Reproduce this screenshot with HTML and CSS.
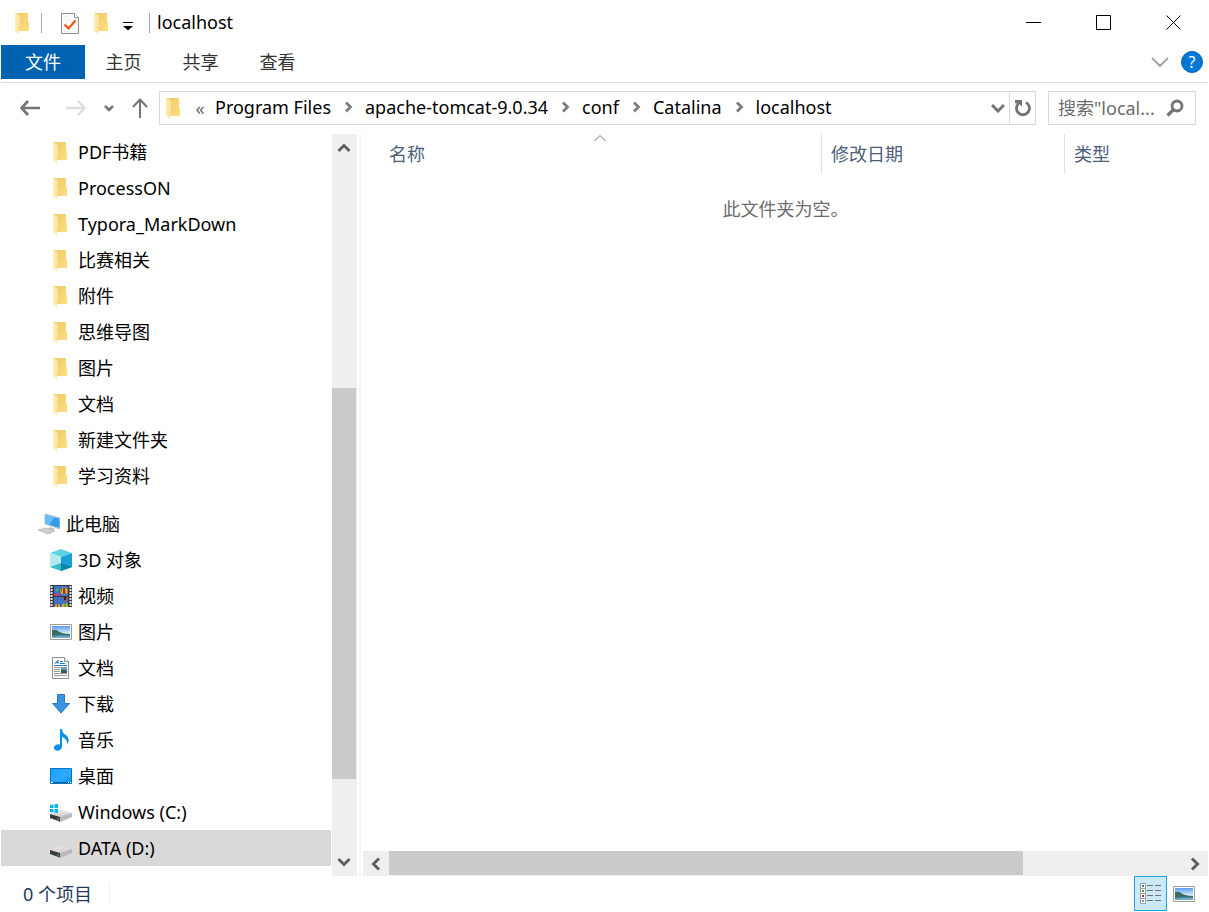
FILE: index.html
```html
<!DOCTYPE html>
<html lang="zh-CN">
<head>
	<meta charset="UTF-8">
	<title>localhost</title>
	<link rel="stylesheet" href="styles.css">
</head>
<body>
<svg class="defs" width="0" height="0">
	<defs>
		<linearGradient id="g-folder" x1="0" y1="0" x2="1" y2="1">
			<stop offset="0" stop-color="#eec762"/><stop offset="1" stop-color="#ffdf85"/>
		</linearGradient>
		<linearGradient id="g-flap" x1="0" y1="0" x2="1" y2="0">
			<stop offset="0" stop-color="#ffeeb4"/><stop offset="1" stop-color="#fbe09a"/>
		</linearGradient>
		<linearGradient id="g-sky" x1="0" y1="0" x2="0" y2="1">
			<stop offset="0" stop-color="#5a9cf0"/><stop offset=".6" stop-color="#d5ecfa"/>
		</linearGradient>
		<linearGradient id="g-drive" x1="0" y1="0" x2="0" y2="1">
			<stop offset="0" stop-color="#e4e4e6"/><stop offset="1" stop-color="#c6c6ca"/>
		</linearGradient>
		<linearGradient id="g-screen" x1="0" y1="0" x2="1" y2="1">
			<stop offset="0" stop-color="#1aa0fa"/><stop offset=".6" stop-color="#2cabff"/><stop offset="1" stop-color="#0b90ee"/>
		</linearGradient>
	</defs>
	<symbol id="i-folder" viewBox="0 0 22 22">
		<path d="M3 1h13v9h1v9H6z" fill="url(#g-folder)"/>
		<path d="M3 1l5 2v12l-1 1v6l-4-3z" fill="url(#g-flap)"/>
	</symbol>
	<symbol id="i-picture" viewBox="0 0 22 22">
		<path d="M.5 3.500h21v15H.5z" fill="#fff" stroke="#9c9c9c"/>
		<path d="M2 5h18v12H2z" fill="url(#g-sky)"/>
		<path d="M2 9q4-1 6 1 4 3 12 3v4H2z" fill="#3d6b5c"/>
		<path d="M2 14q8-1 18 0v3H2z" fill="#3f7fa0"/>
		<path d="M2 16q8-2 18-1v2H2z" fill="#74a8c4"/>
	</symbol>
	<symbol id="i-drive" viewBox="0 0 22 22">
		<path d="M0 13l11-4 11 3v3l-12 6-10-4z" fill="url(#g-drive)"/>
		<path d="M0 13l10 3v4.500L0 17z" fill="#3a3a3a"/>
		<path d="M10 16l12-4v4l-12 5z" fill="#b9b9bd"/>
		<path d="M8 17v2" stroke="#45d04c"/>
	</symbol>
	<symbol id="i-right" viewBox="0 0 10 12">
		<path d="M2 1.500l4.500 4.500L2 10.500" fill="none" stroke="#7d7d7d" stroke-width="2.800"/>
	</symbol>
</svg>

<div class="window">
	<header class="titlebar">
		<svg class="icon"><use href="#i-folder"/></svg>
		<span class="bar bar-first"></span>
		<button class="quick" aria-label="属性">
			<svg class="icon" viewBox="0 0 22 22">
				<path d="M2.500 1.500h13l4 4v16h-17z" fill="#f7f9fb" stroke="#8f8f8f"/>
				<path d="M15.500 1.500v4h4" fill="#fff" stroke="#8f8f8f"/>
				<path d="M5.500 12.500l4 4 7-8" fill="none" stroke="#f0560f" stroke-width="2.200"/>
			</svg>
		</button>
		<button class="quick" aria-label="新建文件夹"><svg class="icon"><use href="#i-folder"/></svg></button>
		<button class="custom" aria-label="自定义快速访问工具栏">
			<svg width="10" height="10" viewBox="0 0 10 10"><path d="M0 1.500h10" stroke="#000"/><path d="M0 5h10L5 9.500z"/></svg>
		</button>
		<span class="bar"></span>
		<h1>localhost</h1>
		<div class="controls">
			<button aria-label="最小化"><svg width="15" height="15"><path d="M0 7.500h15" stroke="#000"/></svg></button>
			<button aria-label="最大化"><svg width="15" height="15"><path d="M.5 .5h14v14H.5z" fill="none" stroke="#000"/></svg></button>
			<button aria-label="关闭"><svg width="15" height="15"><path d="M.5 .5l14 14M14.500 .5l-14 14" stroke="#000"/></svg></button>
		</div>
	</header>

	<nav class="ribbon">
		<button class="tab file">文件</button>
		<button class="tab">主页</button>
		<button class="tab">共享</button>
		<button class="tab">查看</button>
		<button class="expand" aria-label="展开功能区">
			<svg width="18" height="12"><path d="M1 2l8 8 8-8" fill="none" stroke="#a6a6a6" stroke-width="2"/></svg>
		</button>
		<button class="help" aria-label="帮助">?</button>
	</nav>

	<div class="toolbar">
		<div class="history">
			<button class="go" aria-label="后退">
				<svg width="20" height="16"><path d="M1 8h19M8 1L1.500 8 8 15" fill="none" stroke="#747474" stroke-width="2.600"/></svg>
			</button>
			<button class="go" aria-label="前进">
				<svg width="20" height="16"><path d="M0 8h19M12 1l6.500 7-6.500 7" fill="none" stroke="#dcdcdc" stroke-width="2.500"/></svg>
			</button>
			<button class="recent" aria-label="最近浏览的位置">
				<svg width="10" height="8"><path d="M1 2l4 4 4-4" fill="none" stroke="#747474" stroke-width="2.500"/></svg>
			</button>
			<button class="up" aria-label="上移">
				<svg width="16" height="20"><path d="M8 20V2M1 9l7-7.500L15 9" fill="none" stroke="#747474" stroke-width="2"/></svg>
			</button>
		</div>
		<div class="address">
			<svg class="icon"><use href="#i-folder"/></svg>
			<button class="more" aria-label="上级">«</button>
			<ol class="crumbs">
				<li><a href="#">Program Files</a></li>
				<li><svg><use href="#i-right"/></svg><a href="#">apache-tomcat-9.0.34</a></li>
				<li><svg><use href="#i-right"/></svg><a href="#">conf</a></li>
				<li><svg><use href="#i-right"/></svg><a href="#">Catalina</a></li>
				<li><svg><use href="#i-right"/></svg><a href="#">localhost</a></li>
			</ol>
			<button class="drop" aria-label="以前的位置">
				<svg width="14" height="10"><path d="M1 2l6 6 6-6" fill="none" stroke="#747474" stroke-width="3"/></svg>
			</button>
			<button class="refresh" aria-label="刷新">
				<svg width="18" height="18"><path d="M12 3.500a6.500 6.500 0 1 1-7.500 1" fill="none" stroke="#747474" stroke-width="2.800"/><path d="M1 1h7v7L6 5.500 1 4z" fill="#747474"/></svg>
			</button>
		</div>
		<form class="search">
			<input type="text" aria-label="搜索" placeholder="搜索&quot;local...">
			<button type="button" aria-label="搜索">
				<svg width="18" height="18"><circle cx="11" cy="7" r="5" fill="none" stroke="#747474" stroke-width="2.800"/><path d="M7.500 10.500l-6 6" stroke="#747474" stroke-width="3.200"/></svg>
			</button>
		</form>
	</div>

	<div class="main">
		<nav class="tree">
			<ul>
				<li><a href="#"><svg class="icon"><use href="#i-folder"/></svg>PDF书籍</a></li>
				<li><a href="#"><svg class="icon"><use href="#i-folder"/></svg>ProcessON</a></li>
				<li><a href="#"><svg class="icon"><use href="#i-folder"/></svg>Typora_MarkDown</a></li>
				<li><a href="#"><svg class="icon"><use href="#i-folder"/></svg>比赛相关</a></li>
				<li><a href="#"><svg class="icon"><use href="#i-folder"/></svg>附件</a></li>
				<li><a href="#"><svg class="icon"><use href="#i-folder"/></svg>思维导图</a></li>
				<li><a href="#"><svg class="icon"><use href="#i-folder"/></svg>图片</a></li>
				<li><a href="#"><svg class="icon"><use href="#i-folder"/></svg>文档</a></li>
				<li><a href="#"><svg class="icon"><use href="#i-folder"/></svg>新建文件夹</a></li>
				<li><a href="#"><svg class="icon"><use href="#i-folder"/></svg>学习资料</a></li>
			</ul>
			<ul>
				<li><a href="#" class="root">
					<svg class="icon" viewBox="0 0 22 22">
						<path d="M7 1l15 4v11L7 11z" fill="#dfe5ea" stroke="#8c9aa5" stroke-width=".6"/>
						<path d="M7.500 2L21.500 5.500v9.500L7.500 10.500z" fill="#2f9df2"/>
						<path d="M7.500 2l9 2.300-5 7.400-4-1.200z" fill="#67bdf8"/>
						<path d="M12 14l5 2-4 3-4-2z" fill="#b9bfc4"/>
						<path d="M0 17l8-2 9 3-7 3z" fill="#dfe2e6" stroke="#9da3a8" stroke-width=".6"/>
						<path d="M3 17l9 3M6 16l8 3" stroke="#9da3a8" stroke-width=".6"/>
					</svg>此电脑</a></li>
				<li><a href="#">
					<svg class="icon" viewBox="0 0 22 22">
						<path d="M0 4l11-4 11 4-11 4z" fill="#5cd3e2"/>
						<path d="M0 4l11 4v14L0 18z" fill="#b5e8ec"/>
						<path d="M22 4L11 8v14l11-4z" fill="#1a9fd6"/>
						<path d="M0 18l11-4v8z" fill="#35bdcb"/>
						<path d="M22 18l-11-4v8z" fill="#0c86a4"/>
					</svg>3D 对象</a></li>
				<li><a href="#">
					<svg class="icon" viewBox="0 0 22 22">
						<path d="M0 0h22v22H0z" fill="#3a3a3a"/>
						<path d="M4 1h14v10H4zM4 12h14v10H4z" fill="#3f70c8"/>
						<path d="M1.500 1v21M20.500 1v21" stroke="#e8e8e8" stroke-width="2" stroke-dasharray="2 1"/>
						<path d="M4 10q2-3 5-1l1 2H4z" fill="#d83a6c"/>
						<circle cx="14" cy="6" r="3.500" fill="#e3b21c"/><path d="M13 3h2l.5 6h-2.500z" fill="#b72426"/><path d="M11 4l1-1v5z" fill="#2a7a34"/>
						<circle cx="7" cy="5" r="1.500" fill="#56b64a"/>
						<path d="M13 12h5l-2 4h-2z" fill="#d34518"/><path d="M14 12h2v3h-2z" fill="#27221c"/>
						<path d="M5 22q0-3 2.500-3t2.500 3z" fill="#e3b21c"/><path d="M7 19h1v3H7z" fill="#b72426"/>
						<path d="M12 22q0-4 3-4t3 4z" fill="#e3b21c"/><path d="M14 18h2v4h-2z" fill="#56a63c"/>
					</svg>视频</a></li>
				<li><a href="#"><svg class="icon"><use href="#i-picture"/></svg>图片</a></li>
				<li><a href="#">
					<svg class="icon" viewBox="0 0 22 22">
						<path d="M2.500 .5h12l4 4v17h-16z" fill="#fff" stroke="#8f8f8f"/>
						<path d="M14.500 .5v4h4" fill="#f3f3f3" stroke="#8f8f8f"/>
						<path d="M4.500 7l3.500-4v4M6 5.500h2M10 4.500h3M10 6.500h5M4 8.500h13" fill="none" stroke="#1883c6"/>
						<path d="M4 10.500h13M4 12.500h6M4 14.500h6M4 16.500h13M4 18.500h13" stroke="#9a9a9a"/>
						<path d="M11 11h6v5h-6z" fill="#5a95c8"/><path d="M11 13q3-1 6 1v2h-6z" fill="#2f5d58"/>
					</svg>文档</a></li>
				<li><a href="#">
					<svg class="icon" viewBox="0 0 22 22">
						<path d="M7.500 1.500h7v9h5l-8.500 9.500-8.500-9.500h5z" fill="#3c93e2" stroke="#2677c0"/>
					</svg>下载</a></li>
				<li><a href="#">
					<svg class="icon" viewBox="0 0 22 22">
						<path d="M10 0h2q0 4 4 6 5 4 1 10 1-6-5-8v9q0 3-3 4.500-4 1-5-2-.5-3 3-4 2-.5 3 0z" fill="#0a93e6"/>
					</svg>音乐</a></li>
				<li><a href="#">
					<svg class="icon" viewBox="0 0 22 22">
						<path d="M.5 3.500h21v15H.5z" fill="url(#g-screen)" stroke="#0874be"/>
						<path d="M1 17.500h20" stroke="#0b5d98"/>
						<path d="M1 17.500h2M18 17.500h1M20 17.500h1" stroke="#fff"/>
					</svg>桌面</a></li>
				<li><a href="#">
					<svg class="icon" viewBox="0 0 22 22">
						<use href="#i-drive" width="22" height="22"/>
						<path d="M0 4l3.500-.5V7H0zM4.500 3.300L8 3v4H4.500zM0 8h3.500v3.500L0 11zM4.500 8H8v4l-3.500-.4z" fill="#00b4ee"/>
					</svg>Windows (C:)</a></li>
				<li><a href="#" class="current"><svg class="icon"><use href="#i-drive"/></svg>DATA (D:)</a></li>
			</ul>
		</nav>
		<div class="scroll vertical">
			<button aria-label="向上滚动"><svg width="14" height="10"><path d="M1.500 8L7 2.500 12.500 8" fill="none" stroke="#606060" stroke-width="3"/></svg></button>
			<div class="track"><div class="thumb"></div></div>
			<button aria-label="向下滚动"><svg width="14" height="10"><path d="M1.500 2L7 7.500 12.500 2" fill="none" stroke="#606060" stroke-width="3"/></svg></button>
		</div>
		<div class="splitter"></div>
		<section class="content">
			<div class="files">
				<table>
					<thead>
						<tr>
							<th class="name"><svg class="sort" width="12" height="8"><path d="M.5 7L6 1.500 11.500 7" fill="none" stroke="#707070"/></svg>名称</th>
							<th class="date">修改日期</th>
							<th>类型</th>
						</tr>
					</thead>
					<tbody>
						<tr><td colspan="3">此文件夹为空。</td></tr>
					</tbody>
				</table>
			</div>
			<div class="scroll horizontal">
				<button aria-label="向左滚动"><svg width="10" height="14"><path d="M8 1.500L2.500 7 8 12.500" fill="none" stroke="#606060" stroke-width="3"/></svg></button>
				<div class="track"><div class="thumb"></div></div>
				<button aria-label="向右滚动"><svg width="10" height="14"><path d="M2 1.500L7.500 7 2 12.500" fill="none" stroke="#606060" stroke-width="3"/></svg></button>
			</div>
		</section>
	</div>

	<footer class="status">
		<span class="count">0 个项目</span>
		<div class="views">
			<button class="active" aria-label="详细信息">
				<svg width="22" height="22" viewBox="0 0 22 22">
					<path d="M.5 .5h5v5h-5zM.5 5.500h5v5h-5zM.5 10.500h5v5h-5zM.5 15.500h5v5h-5z" fill="#fff" stroke="#9c9c9c"/>
					<path d="M2 2h2v2H2z" fill="#3b7cae"/><path d="M2 7h2v2H2z" fill="#5a8f3c"/><path d="M2 12h2v2H2z" fill="#cf2a1c"/><path d="M2 17h2v2H2z" fill="#7fa9a0"/>
					<path d="M7 2.500h6M15 2.500h6M7 7.500h6M15 7.500h6M7 12.500h6M15 12.500h6M7 17.500h6M15 17.500h6" stroke="#707070"/>
				</svg>
			</button>
			<button aria-label="大缩略图"><svg class="icon"><use href="#i-picture"/></svg></button>
		</div>
	</footer>
</div>
</body>
</html>
```
FILE: styles.css
```css
*{
	box-sizing: border-box;
}
body{
	margin: 0;
	font-family: "Noto Sans", "Noto Sans CJK SC", sans-serif;
	font-size: 18px;
	line-height: 24px;
	color: #000;
	background: #fff;
}
button{
	display: flex;
	align-items: center;
	justify-content: center;
	padding: 0;
	border: none;
	background: none;
	font: inherit;
	color: inherit;
}
a{
	color: inherit;
	text-decoration: none;
}
ul,ol{
	margin: 0;
	padding: 0;
	list-style: none;
}
svg{
	display: block;
	flex: none;
}
.defs{
	position: absolute;
}
.icon{
	width: 22px;
	height: 22px;
}
.window{
	display: flex;
	flex-direction: column;
	height: 100vh;
	padding: 0 1px;
}

/* 标题栏 */
.titlebar{
	display: flex;
	align-items: center;
	height: 45px;
	padding-left: 11px;
}
.bar{
	width: 1px;
	height: 20px;
	background: #a8a8a8;
}
.bar-first{
	margin: 0 17px 0 7px;
}
.quick{
	margin-right: 10px;
}
.custom{
	width: 18px;
	margin: 6px 12px 0 -4px;
}
h1{
	margin: 0 0 0 7px;
	padding-bottom: 2px;
	font-size: 18px;
	font-weight: normal;
}
.controls{
	display: flex;
	margin-left: auto;
}
.controls button{
	width: 70px;
	height: 45px;
}

/* 功能区 */
.ribbon{
	display: flex;
	align-items: center;
	height: 38px;
	padding-bottom: 3px;
	border-bottom: 1px solid #dadbdc;
}
.tab{
	width: 77px;
	height: 34px;
	color: #333;
}
.file{
	width: 84px;
	background: #0063b1;
	color: #fff;
}
.expand{
	margin-left: auto;
}
.help{
	width: 22px;
	height: 22px;
	margin: 0 5px 0 12px;
	border-radius: 50%;
	background: #0078d7;
	border: 1px solid #0065b8;
	color: #fff;
	font-size: 16px;
}

/* 地址栏 */
.toolbar{
	display: flex;
	height: 51px;
	padding: 8px 12px 9px 19px;
}
.history{
	display: flex;
	align-items: center;
	width: 139px;
}
.go{
	margin-right: 26px;
}
.go + .recent{
	margin-left: -8px;
}
.up{
	margin-left: 18px;
}
.address{
	display: flex;
	align-items: center;
	flex: 1;
	min-width: 0;
	border: 1px solid #d9d9d9;
	padding-left: 3px;
}
.more{
	width: 30px;
	height: 30px;
	color: #666;
}
.crumbs{
	display: flex;
	flex: 1;
	min-width: 0;
	padding-bottom: 2px;
	white-space: nowrap;
}
.crumbs li{
	display: flex;
	align-items: center;
}
.crumbs svg{
	width: 10px;
	height: 12px;
	margin: 0 11px 0 13px;
}
.drop{
	width: 22px;
}
.refresh{
	width: 26px;
	height: 32px;
	border-left: 1px solid #d9d9d9;
}
.search{
	display: flex;
	align-items: center;
	width: 148px;
	margin-left: 12px;
	padding: 0 11px 0 9px;
	border: 1px solid #d9d9d9;
}
.search input{
	flex: 1;
	min-width: 0;
	padding: 0;
	border: none;
	outline: none;
	font: inherit;
}
.search input::placeholder{
	color: #6d6d6d;
}

/* 主体 */
.main{
	display: flex;
	flex: 1;
	min-height: 0;
}
.tree{
	width: 330px;
	overflow: hidden;
}
.tree ul + ul{
	margin-top: 12px;
}
.tree a{
	display: flex;
	align-items: center;
	gap: 6px;
	height: 36px;
	padding-left: 49px;
}
.tree .root{
	padding-left: 37px;
}
.tree .current{
	background: #d9d9d9;
}
.scroll{
	display: flex;
	background: #efefef;
}
.track{
	display: flex;
	flex: 1;
}
.thumb{
	background: #cbcbcb;
}
.vertical{
	flex-direction: column;
	width: 25px;
	margin-left: 1px;
}
.vertical button{
	width: 24px;
	height: 28px;
}
.vertical .track{
	flex-direction: column;
	justify-content: flex-end;
	padding-bottom: 69px;
}
.vertical .thumb{
	width: 24px;
	flex: 0 0 391px;
}
.horizontal{
	height: 25px;
}
.horizontal button{
	width: 26px;
}
.horizontal .thumb{
	width: 80%;
	height: 24px;
}
.splitter{
	width: 2px;
	margin: 0 2px;
	background: #f5f5f5;
}
.content{
	display: flex;
	flex-direction: column;
	flex: 1;
	min-width: 0;
}
.files{
	flex: 1;
}
table{
	width: 100%;
	table-layout: fixed;
	border-spacing: 0;
}
th{
	position: relative;
	height: 40px;
	padding: 0 9px;
	border-right: 1px solid #e2e2e2;
	font-weight: normal;
	text-align: left;
	color: #4c607a;
}
th:last-child{
	border-right: none;
}
.name{
	width: 459px;
	padding-left: 26px;
}
.date{
	width: 243px;
}
.sort{
	position: absolute;
	top: 0;
	left: calc(50% + 2px);
}
td{
	height: 70px;
	padding: 0;
	text-align: center;
	color: #6d6d6d;
}

/* 状态栏 */
.status{
	display: flex;
	align-items: center;
	justify-content: space-between;
	height: 36px;
	padding: 0 13px 1px 22px;
	color: #1e395b;
}
.count{
	padding-right: 17px;
	border-right: 1px solid #f0f0f0;
	line-height: 18px;
}
.views{
	display: flex;
	gap: 6px;
}
.views .active{
	width: 33px;
	height: 35px;
	border: 1px solid #26a0da;
	background: #cbe8f6;
}
```
